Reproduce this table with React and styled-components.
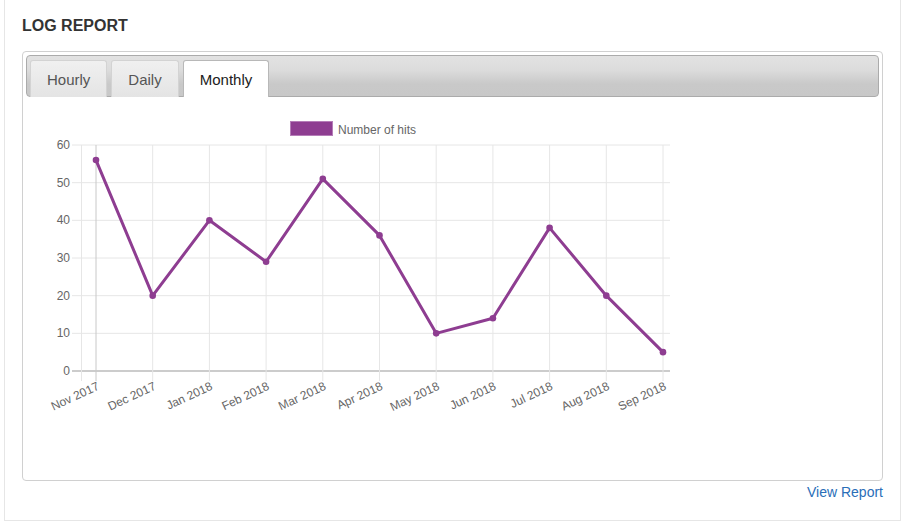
import React from 'react';
import styled, { createGlobalStyle } from 'styled-components';

const months = [
  'Nov 2017', 'Dec 2017', 'Jan 2018', 'Feb 2018', 'Mar 2018', 'Apr 2018',
  'May 2018', 'Jun 2018', 'Jul 2018', 'Aug 2018', 'Sep 2018'
];
const hits = [56, 20, 40, 29, 51, 36, 10, 14, 38, 20, 5];

// chart geometry, in page pixels (the svg viewBox starts at the box's inner corner)
const X0 = 96;
const STEP = 56.7;
const Y0 = 371;
const YTOP = 145;
const PER = (Y0 - YTOP) / 60;

const px = (i) => X0 + i * STEP;
const py = (v) => Y0 - v * PER;

const GlobalStyle = createGlobalStyle`
  body {
    margin: 0;
    background: #fff;
    font-family: 'Liberation Sans', Arial, sans-serif;
  }
`;

const LineChart = () => {
  const pts = hits.map((v, i) => `${px(i)},${py(v)}`).join(' ');
  return (
    <svg width='660' height='370' viewBox='26 97 660 370'>
      {[0, 10, 20, 30, 40, 50, 60].map((v) => (
        <g key={v}>
          <line
            x1='72' x2='670' y1={py(v)} y2={py(v)}
            stroke={v === 0 ? '#999' : '#e6e6e6'}
            strokeWidth='1'
          />
          <text
            x='70' y={py(v) + 4}
            textAnchor='end' fontSize='12' fill='#666'
            fontFamily='Liberation Sans, Arial, sans-serif'
          >
            {v}
          </text>
        </g>
      ))}
      <line x1='81.5' x2='81.5' y1={YTOP} y2='381' stroke='#e6e6e6' />
      {months.map((m, i) => (
        <g key={m}>
          <line
            x1={px(i)} x2={px(i)} y1={YTOP} y2='381'
            stroke={i === 0 ? '#c8c8c8' : '#e6e6e6'}
          />
          <text
            transform={`translate(${px(i) + 4} 389) rotate(-25)`}
            textAnchor='end' fontSize='12' fill='#666'
            fontFamily='Liberation Sans, Arial, sans-serif'
          >
            {m}
          </text>
        </g>
      ))}
      <polyline
        points={pts} fill='none' stroke='#8e3d91'
        strokeWidth='3' strokeLinejoin='round'
      />
      {hits.map((v, i) => (
        <circle key={i} cx={px(i)} cy={py(v)} r='3.3' fill='#8e3d91' />
      ))}
      <rect x='290.5' y='121.5' width='42' height='14' fill='#8e3d91' stroke='#b57db8' />
      <text
        x='338' y='133.5' fontSize='12' fill='#666'
        fontFamily='Liberation Sans, Arial, sans-serif'
      >
        Number of hits
      </text>
    </svg>
  );
};

const App = () => {
  const tabs = ['Hourly', 'Daily', 'Monthly'];
  return (
    <Page>
      <GlobalStyle />
      <Panel>
        <Title>LOG REPORT</Title>
        <Box>
          <TabBar>
            {tabs.map((t) => (
              <Tab key={t} active={t === 'Monthly'}>
                {t}
              </Tab>
            ))}
          </TabBar>
          <LineChart />
        </Box>
        <Footer>
          <ReportLink href='#'>View Report</ReportLink>
        </Footer>
      </Panel>
    </Page>
  );
};

const Page = styled.div`
  padding: 0 4px;
`;

const Panel = styled.div`
  height: 521px;
  box-sizing: border-box;
  border: 1px solid #e6e6e6;
  border-top: none;
  padding: 17px 17px 0 17px;
`;

const Title = styled.h2`
  margin: 0 0 16px 0;
  font-size: 16px;
  line-height: 18px;
  font-weight: bold;
  color: #333;
`;

const Box = styled.div`
  height: 430px;
  box-sizing: border-box;
  border: 1px solid #d0d0d0;
  border-radius: 4px;
  padding: 3px;
  overflow: hidden;
`;

const TabBar = styled.div`
  display: flex;
  align-items: flex-end;
  gap: 4px;
  height: 42px;
  box-sizing: border-box;
  padding: 4px 3px 0 3px;
  border: 1px solid #ababab;
  border-radius: 4px;
  background: linear-gradient(#e2e2e2 0%, #dcdcdc 35%, #c9c9c9 70%, #c8c8c8 100%);
`;

const Tab = styled.div`
  height: 37px;
  margin-bottom: -1px;
  box-sizing: border-box;
  padding: 0 16px;
  display: flex;
  align-items: center;
  font-size: 15px;
  color: ${(p) => (p.active ? '#212121' : '#555')};
  background: ${(p) => (p.active ? '#fff' : 'linear-gradient(#f0f0f0, #e4e4e4)')};
  border: 1px solid ${(p) => (p.active ? '#b8b8b8' : '#d3d3d3')};
  border-bottom: none;
  border-radius: 3px 3px 0 0;
`;

const Footer = styled.div`
  display: flex;
  justify-content: flex-end;
  padding-top: 3px;
`;

const ReportLink = styled.a`
  font-size: 14px;
  line-height: 16px;
  color: #2a6eb8;
  text-decoration: none;
`;

export default App;
